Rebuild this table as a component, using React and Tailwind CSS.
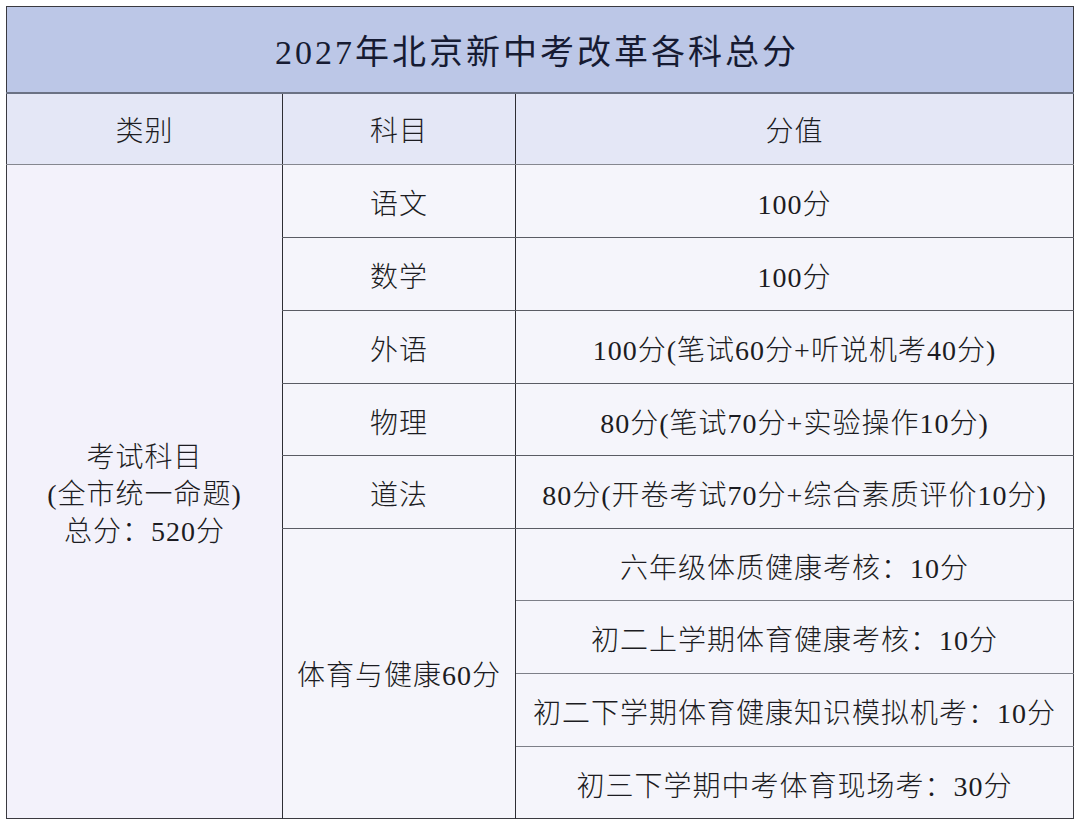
const rows = [
  { subject: '语文', score: '100分', h: 'h-[73px]' },
  { subject: '数学', score: '100分', h: 'h-[73px]' },
  { subject: '外语', score: '100分(笔试60分+听说机考40分)', h: 'h-[73px]' },
  { subject: '物理', score: '80分(笔试70分+实验操作10分)', h: 'h-[72px]' },
  { subject: '道法', score: '80分(开卷考试70分+综合素质评价10分)', h: 'h-[73px]' },
];

const sports = [
  { item: '六年级体质健康考核：10分', h: 'h-[72px]' },
  { item: '初二上学期体育健康考核：10分', h: 'h-[73px]' },
  { item: '初二下学期体育健康知识模拟机考：10分', h: 'h-[73px]' },
  { item: '初三下学期中考体育现场考：30分', h: 'h-[72px]' },
];

export default function App() {
  return (
    <div className="w-[1080px] h-[825px] bg-white pl-[6px] pt-[6px] font-['Liberation_Serif','Noto_Sans_CJK_SC',serif] text-[#1c1c22]">
      <table className="w-[1067px] table-fixed border-collapse border border-[#3a3a40]">
        <colgroup>
          <col className="w-[276px]" />
          <col className="w-[233px]" />
          <col className="w-[558px]" />
        </colgroup>
        <thead>
          <tr className="h-[86px] bg-[#bcc7e7]">
            <th
              colSpan={3}
              className="border-b-2 border-[#6b7284] pt-[6px] pr-[6px] text-center text-[34px] font-normal tracking-[3px] text-[#161b33]"
            >
              2027年北京新中考改革各科总分
            </th>
          </tr>
          <tr className="h-[72px] bg-[#e4e7f6] text-[28px] font-light tracking-[1px]">
            <th className="border-b border-[#85878f] pt-[6px] font-light">类别</th>
            <th className="border-x border-b border-x-[#2e2e34] border-b-[#85878f] pt-[6px] font-light">科目</th>
            <th className="border-b border-[#85878f] pt-[6px] font-light">分值</th>
          </tr>
        </thead>
        <tbody className="bg-[#f5f5fb] text-[28px] font-light tracking-[1px] text-center">
          {rows.map((row, i) => (
            <tr key={row.subject} className={row.h}>
              {i === 0 && (
                <td rowSpan={9} className="bg-[#f3f2fb] leading-[37px] align-middle">
                  <div className="pt-[6px]">考试科目</div>
                  <div>(全市统一命题)</div>
                  <div>总分：520分</div>
                </td>
              )}
              <td className="border-x border-b border-x-[#2e2e34] border-b-[#5a5c64] pt-[8px]">{row.subject}</td>
              <td className="border-b border-[#5a5c64] pt-[8px] whitespace-nowrap">{row.score}</td>
            </tr>
          ))}
          {sports.map((s, i) => (
            <tr key={s.item} className={s.h}>
              {i === 0 && (
                <td rowSpan={4} className="border-x border-[#2e2e34] whitespace-nowrap pt-[4px]">
                  体育与健康60分
                </td>
              )}
              <td className={`whitespace-nowrap pt-[8px] ${i < 3 ? 'border-b border-[#7d7f88]' : ''}`}>{s.item}</td>
            </tr>
          ))}
        </tbody>
      </table>
    </div>
  );
}
